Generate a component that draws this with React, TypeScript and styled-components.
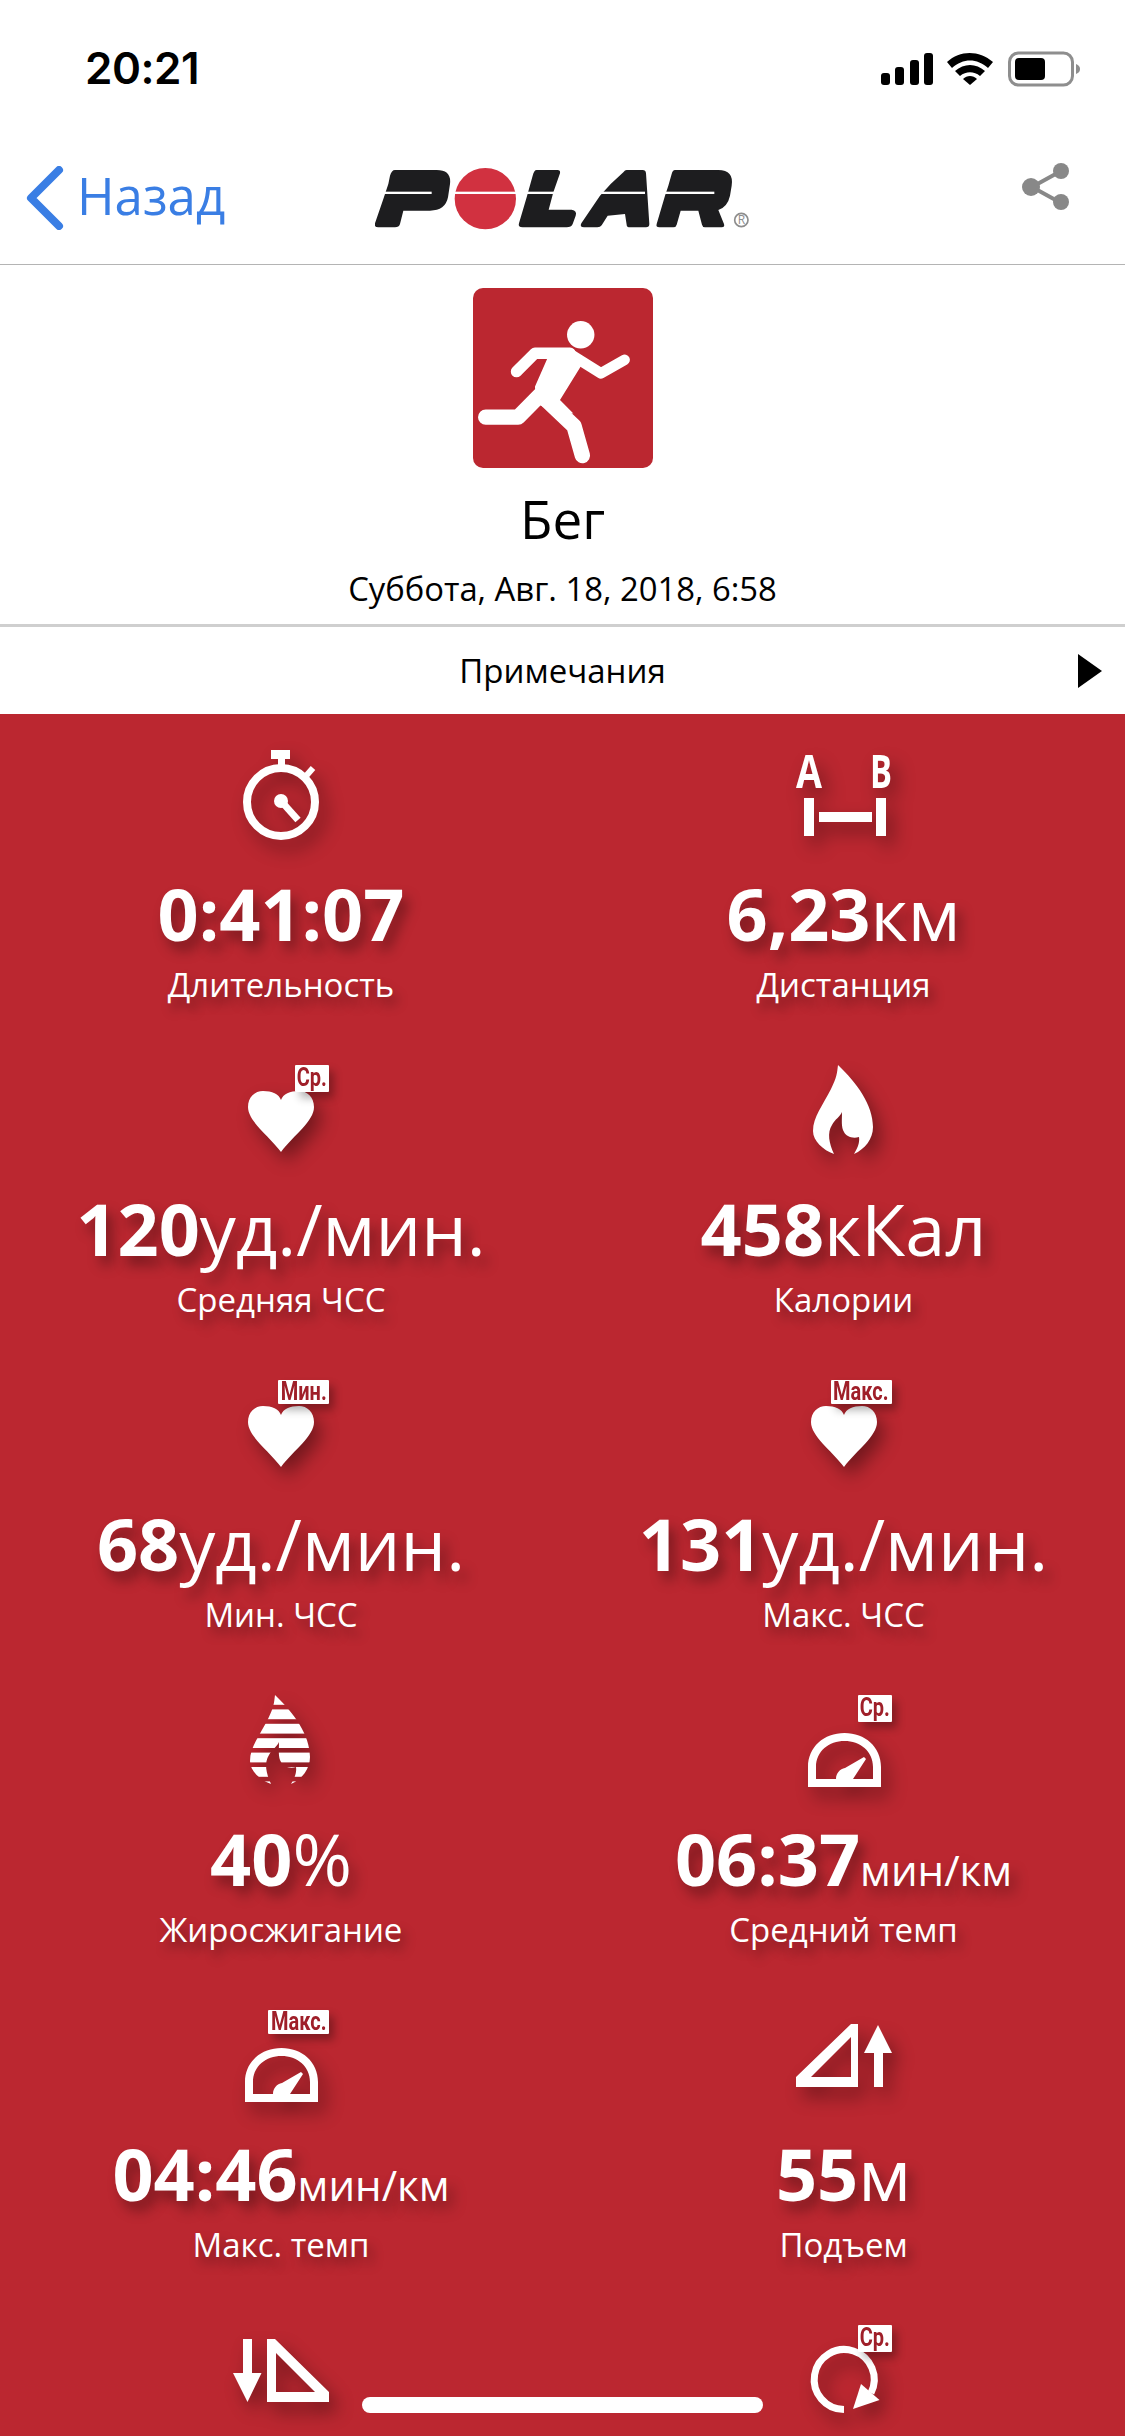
import React from 'react';
import styled, { createGlobalStyle } from 'styled-components';

const RED = '#bb2730';

const GlobalStyle = createGlobalStyle`
  html, body {
    margin: 0;
    padding: 0;
    background: #fff;
  }
  body {
    font-family: "Open Sans", "Noto Sans", sans-serif;
  }
`;

const Screen = styled.div`
  position: relative;
  width: 1125px;
  height: 2436px;
  overflow: hidden;
  background: #fff;
`;

const StatusBar = styled.div`
  height: 130px;
  box-sizing: border-box;
  padding: 42px 44px 0 85px;
  display: flex;
  justify-content: space-between;
  align-items: flex-start;
`;

const Time = styled.div`
  font-family: Inter, "Liberation Sans", sans-serif;
  font-size: 44px;
  font-weight: 600;
  line-height: 52px;
  letter-spacing: -0.5px;
  color: #000;
`;

const StatusIcons = styled.svg`
  display: block;
  margin-top: 9px;
`;

const NavBar = styled.div`
  height: 135px;
  box-sizing: border-box;
  border-bottom: 1px solid #b4b4b4;
  display: grid;
  grid-template-columns: 375px 375px 1fr;
  align-items: start;
`;

const BackLink = styled.div`
  display: flex;
  align-items: center;
  gap: 13px;
  padding: 34px 0 0 26px;
  color: #3a7ee4;
  font-size: 51px;
  line-height: 68px;
`;

const BackLabel = styled.span`
  position: relative;
  top: -3px;
`;

const Logo = styled.svg`
  display: block;
  margin-top: 38px;
`;

const ShareIcon = styled.svg`
  display: block;
  margin: 33px 0 0 272px;
`;

const Summary = styled.section`
  display: flex;
  flex-direction: column;
  align-items: center;
  padding-top: 23px;
  height: 362px;
  box-sizing: border-box;
  border-bottom: 3px solid #cfcfcf;
`;

const SportBadge = styled.svg`
  display: block;
  border-radius: 10px;
`;

const Title = styled.h1`
  margin: 21px 0 0;
  font-size: 53px;
  font-weight: 400;
  line-height: 60px;
  color: #000;
`;

const DateLine = styled.div`
  margin-top: 18px;
  font-size: 32.800px;
  line-height: 44px;
  color: #000;
`;

const NotesRow = styled.div`
  position: relative;
  height: 87px;
  display: flex;
  align-items: center;
  justify-content: center;
  font-size: 33px;
  color: #000;
`;

const NotesArrow = styled.div`
  position: absolute;
  right: 23px;
  top: 27px;
  width: 0;
  height: 0;
  border-left: 24px solid #000;
  border-top: 17px solid transparent;
  border-bottom: 17px solid transparent;
`;

const Panel = styled.section`
  background: ${RED};
  display: grid;
  grid-template-columns: 562px 563px;
  grid-auto-rows: 315px;
  padding-top: 26px;
  height: 1722px;
  box-sizing: border-box;
`;

const Cell = styled.div`
  display: flex;
  flex-direction: column;
  align-items: center;
  color: #fff;
`;

const IconBox = styled.div`
  position: relative;
  width: 130px;
  height: 120px;
  flex: none;
  svg {
    display: block;
    overflow: visible;
    filter: drop-shadow(7px 10px 9px rgba(0, 0, 0, 0.38));
  }
`;

const Tag = styled.div`
  position: absolute;
  top: 10px;
  right: 17px;
  width: ${p => p.$width}px;
  height: ${p => (p.$tall ? 27 : 24)}px;
  display: flex;
  justify-content: center;
  background: #fff;
  border-radius: 1px;
  color: #9f1f29;
  font-family: Roboto, "Liberation Sans", sans-serif;
  font-size: 25px;
  font-weight: 700;
  line-height: ${p => (p.$tall ? 25 : 24)}px;
  white-space: nowrap;
  box-shadow: 5px 6px 8px rgba(0, 0, 0, 0.3);
`;

const TagText = styled.span`
  display: block;
  transform: scaleX(0.8);
`;

const Value = styled.div`
  margin-top: 8px;
  font-size: 72px;
  font-weight: 700;
  line-height: 90px;
  white-space: nowrap;
  text-shadow: 6px 9px 13px rgba(0, 0, 0, 0.36);
`;

const Unit = styled.span`
  font-weight: 400;
  font-size: ${p => (p.$small ? 42 : 72)}px;
  line-height: 0;
`;

const Label = styled.div`
  margin-top: 5px;
  font-size: 33px;
  line-height: 44px;
  white-space: nowrap;
  text-shadow: 5px 8px 11px rgba(0, 0, 0, 0.36);
`;

const HomeIndicator = styled.div`
  position: absolute;
  left: 362px;
  top: 2397px;
  width: 401px;
  height: 16px;
  border-radius: 8px;
  background: #fff;
`;

const FLAME =
  'M59 10C58 18 58 22 52 34C44 50 34 62 34 76C34 86 44 95 55 99C50 88 48 78 53 70C56 64 61 62 63 57C63 65 62 72 65 77C67 81 73 84 80 82C81 88 78 94 75 99C86 94 94 84 94 72C94 50 78 28 59 10Z';

const TAG_WIDTHS: Record<string, number> = { 'Ср.': 34, 'Мин.': 51, 'Макс.': 61 };

const IconSvg = ({ children }: { children: React.ReactNode }) => (
  <svg width="130" height="120" viewBox="0 0 130 120" fill="#fff">
    {children}
  </svg>
);

const Stopwatch = () => (
  <IconSvg>
    <rect x="55" y="10" width="19" height="9" />
    <rect x="62" y="18" width="7" height="8" />
    <path d="M90 36L97 28" stroke="#fff" strokeWidth="6" />
    <circle cx="65" cy="62" r="34" fill="none" stroke="#fff" strokeWidth="8" />
    <circle cx="65" cy="61" r="7" />
    <path d="M65 61L82 80" stroke="#fff" strokeWidth="7" />
  </IconSvg>
);

const Distance = () => (
  <IconSvg>
    <text x="30" y="48" textAnchor="middle" fontFamily="Open Sans" fontWeight="700" fontSize="47" textLength="26" lengthAdjust="spacingAndGlyphs">A</text>
    <text x="102" y="48" textAnchor="middle" fontFamily="Open Sans" fontWeight="700" fontSize="47" textLength="22" lengthAdjust="spacingAndGlyphs">B</text>
    <rect x="25" y="58" width="10" height="38" />
    <rect x="97" y="58" width="10" height="38" />
    <rect x="40" y="72" width="53" height="10" />
  </IconSvg>
);

const Heart = () => (
  <IconSvg>
    <path d="M65 97C52 80 32 66 32 52C32 42 39 36 47 36C56 36 63 39 65 45C67 39 74 36 83 36C91 36 98 42 98 52C98 66 78 80 65 97Z" />
  </IconSvg>
);

const Flame = () => (
  <IconSvg>
    <path d={FLAME} />
  </IconSvg>
);

const FatBurn = () => (
  <IconSvg>
    <defs>
      <clipPath id="fat-flame">
        <path d={FLAME} />
      </clipPath>
    </defs>
    <g clipPath="url(#fat-flame)">
      {[10, 24.4, 38.8, 53.2, 67.6, 82, 96.4].map(y => (
        <rect key={y} x="30" y={y} width="70" height="9.8" />
      ))}
    </g>
  </IconSvg>
);

const Gauge = () => (
  <IconSvg>
    <path
      fillRule="evenodd"
      d="M29 102V82C29 62 45 48 65.5 48C86 48 102 62 102 82V102ZM37 94H94V82C94 66 81 56 65.5 56C50 56 37 66 37 82Z"
    />
    <path d="M57 94C57 88 61 84 66 83L85 72L87 74L74 94Z" />
  </IconSvg>
);

const Ascent = () => (
  <IconSvg>
    <path fillRule="evenodd" d="M17 87V77L72 24H79V87ZM32 77H72V37Z" />
    <path d="M99 25L113 53H104V87H95V53H85Z" />
  </IconSvg>
);

const Descent = () => (
  <IconSvg>
    <path d="M27 24H36V58H45.500L31.500 87L17 58H27Z" />
    <path fillRule="evenodd" d="M51 24H59L113 77V87H51ZM60 38V77H99Z" />
  </IconSvg>
);

const Cadence = () => (
  <IconSvg>
    <path d="M65 94.500A30 30 0 1 1 92 78" fill="none" stroke="#fff" strokeWidth="7" />
    <path d="M82 69L100.500 85L74 94Z" />
  </IconSvg>
);

type Metric = {
  icon: React.ReactNode;
  tag?: string;
  value?: string;
  unit?: string;
  smallUnit?: boolean;
  label?: string;
};

const metrics: Metric[] = [
  { icon: <Stopwatch />, value: '0:41:07', label: 'Длительность' },
  { icon: <Distance />, value: '6,23', unit: 'км', label: 'Дистанция' },
  { icon: <Heart />, tag: 'Ср.', value: '120', unit: 'уд./мин.', label: 'Средняя ЧСС' },
  { icon: <Flame />, value: '458', unit: 'кКал', label: 'Калории' },
  { icon: <Heart />, tag: 'Мин.', value: '68', unit: 'уд./мин.', label: 'Мин. ЧСС' },
  { icon: <Heart />, tag: 'Макс.', value: '131', unit: 'уд./мин.', label: 'Макс. ЧСС' },
  { icon: <FatBurn />, value: '40', unit: '%', label: 'Жиросжигание' },
  { icon: <Gauge />, tag: 'Ср.', value: '06:37', unit: 'мин/км', smallUnit: true, label: 'Средний темп' },
  { icon: <Gauge />, tag: 'Макс.', value: '04:46', unit: 'мин/км', smallUnit: true, label: 'Макс. темп' },
  { icon: <Ascent />, value: '55', unit: 'м', label: 'Подъем' },
  { icon: <Descent /> },
  { icon: <Cadence />, tag: 'Ср.' },
];

const PolarLogo = () => (
  <Logo width="375" height="62" viewBox="105 112 1125 186">
    <g fill="#1d1d1f">
      <path d="M165 118H290Q335 118 330 160L324 200Q316 240 270 240H190L180 280Q177 290 165 290H115Q100 290 106 275L130 205Q135 190 145 160L150 135Q155 118 165 118Z" />
      <path d="M590 118H652Q662 118 660 128L640 185L626 237H695Q712 240 707 255L698 280Q694 290 680 290H548Q533 290 537 278L560 200L578 135Q582 118 590 118Z" />
      <path d="M860 118H908Q917 118 918 128L928 280Q928 290 918 290H870Q860 290 860 282L855 250L803 255L785 284Q781 290 772 290H732Q718 290 724 278L780 195L812 160L850 125Q855 118 860 118Z" />
      <path d="M1005 118H1135Q1182 118 1175 165L1170 195Q1163 228 1135 238L1152 280Q1155 290 1145 290H1095Q1088 290 1086 282L1075 240H1022L1010 282Q1008 290 1000 290H958Q947 290 950 280L975 195L985 165L995 130Q998 118 1005 118Z" />
    </g>
    <circle cx="436" cy="204" r="92" fill="#d13140" />
    <g fill="#fff">
      <rect x="125" y="183" width="150" height="7" />
      <rect x="340" y="183" width="195" height="7" />
      <rect x="555" y="183" width="88" height="7" />
      <rect x="780" y="183" width="135" height="7" />
      <rect x="975" y="183" width="148" height="7" />
    </g>
    <circle cx="1204" cy="268" r="20" fill="none" stroke="#8d8d8d" strokeWidth="5" />
    <text x="1204" y="281" textAnchor="middle" fontFamily="Open Sans" fontSize="36" fill="#8d8d8d">R</text>
  </Logo>
);

export default function App() {
  return (
    <Screen>
      <GlobalStyle />
      <StatusBar>
        <Time>20:21</Time>
        <StatusIcons width="200" height="36" viewBox="0 0 200 36" fill="#000">
          <rect x="0" y="22" width="9" height="12" rx="3" />
          <rect x="14" y="16" width="9" height="18" rx="3" />
          <rect x="29" y="9" width="9" height="25" rx="3" />
          <rect x="43" y="2" width="9" height="32" rx="3" />
          <path d="M66 11C79 -1 98 -1 112 11L107 17C96 7 82 7 71 17Z" />
          <path d="M74 20C83 12 95 12 104 20L99 25C93 20 85 20 79 25Z" />
          <path d="M82 28C86 24 92 24 96 28L89 34Z" />
          <rect x="128.500" y="2" width="63" height="32" rx="9" fill="none" stroke="#8e8e8e" strokeWidth="3" />
          <rect x="134" y="7" width="30" height="22" rx="4" />
          <path d="M195 13C198 14 199 16 199 18C199 20 198 22 195 23Z" fill="#8e8e8e" />
        </StatusIcons>
      </StatusBar>

      <NavBar>
        <BackLink>
          <svg width="38" height="64" viewBox="0 0 38 64" fill="none">
            <path d="M33 4L5 32L33 60" stroke="#3a7ee4" strokeWidth="8" strokeLinecap="round" strokeLinejoin="round" />
          </svg>
          <BackLabel>Назад</BackLabel>
        </BackLink>
        <PolarLogo />
        <ShareIcon width="48" height="48" viewBox="0 0 48 48" fill="#888">
          <path d="M10 24L39 8M10 24L39 40" stroke="#888" strokeWidth="4" />
          <circle cx="9" cy="24" r="9" />
          <circle cx="39" cy="8" r="8" />
          <circle cx="39" cy="39" r="8" />
        </ShareIcon>
      </NavBar>

      <Summary>
        <SportBadge width="180" height="180" viewBox="400 475 538 538">
          <rect x="400" y="475" width="538" height="538" fill={RED} />
          <circle cx="722" cy="615" r="41" fill="#fff" />
          <path d="M630 668H690L733 692L660 810L700 850L640 845L590 820L585 770Z" fill="#fff" />
          <g fill="none" stroke="#fff" strokeLinecap="round" strokeLinejoin="round">
            <path d="M530 725L585 670H690" strokeWidth="34" />
            <path d="M690 672L782 730L853 690" strokeWidth="32" />
            <path d="M620 810L702 888L727 976" strokeWidth="46" />
            <path d="M438 861H535L600 795" strokeWidth="46" />
          </g>
        </SportBadge>
        <Title>Бег</Title>
        <DateLine>Суббота, Авг. 18, 2018, 6:58</DateLine>
      </Summary>

      <NotesRow>
        Примечания
        <NotesArrow />
      </NotesRow>

      <Panel>
        {metrics.map((m, i) => (
          <Cell key={i}>
            <IconBox>
              {m.icon}
              {m.tag && (
                <Tag $tall={m.tag === 'Ср.'} $width={TAG_WIDTHS[m.tag]}>
                  <TagText>{m.tag}</TagText>
                </Tag>
              )}
            </IconBox>
            {m.value && (
              <Value>
                {m.value}
                {m.unit && <Unit $small={m.smallUnit}>{m.unit}</Unit>}
              </Value>
            )}
            {m.label && <Label>{m.label}</Label>}
          </Cell>
        ))}
      </Panel>

      <HomeIndicator />
    </Screen>
  );
}
